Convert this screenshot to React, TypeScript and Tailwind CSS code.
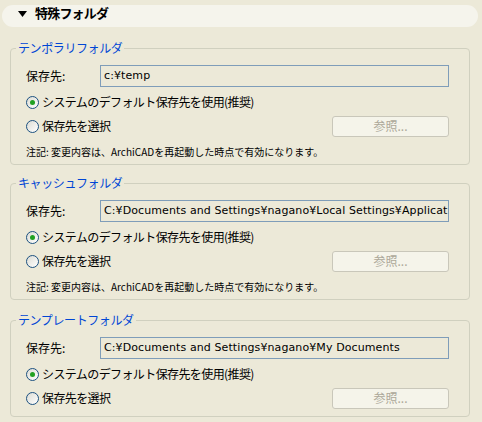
import React from 'react';

type FolderProps = {
  title: string;
  path: string;
  note?: boolean;
  className?: string;
};

function Radio({ checked, label }: { checked?: boolean; label: string }) {
  return (
    <div className="flex items-center h-[20px]">
      <span className="relative flex items-center justify-center w-[13px] h-[13px] rounded-full border border-[#1C5180] bg-gradient-to-br from-[#DCDCD4] to-white">
        {checked && <span className="w-[5px] h-[5px] rounded-full bg-[#21A121]" />}
      </span>
      <span className="ml-[3px] text-[12px] tracking-[-0.6px] text-black">{label}</span>
    </div>
  );
}

function FolderGroup({ title, path, note, className }: FolderProps) {
  return (
    <fieldset className={`ml-[10px] w-[460px] border border-[#D0D0BF] rounded-[4px] ${note ? 'pb-[5px]' : 'pb-[7px]'} ${className ?? ''}`}>
      <legend className="ml-[5px] px-[2px] h-[14px] leading-[14px] text-[12px] tracking-[-0.4px] text-[#0046D5]">{title}</legend>
      <div className="pl-[15px]">
        <div className="mt-[10px] flex items-center h-[22px]">
          <span className="w-[74px] text-[12px] text-black">保存先:</span>
          <div className="w-[349px] h-[22px] border border-[#7F9DB9] flex items-center px-[3px] overflow-hidden whitespace-nowrap text-[11px] tracking-[0.1px] font-['DejaVu_Sans',sans-serif] text-black">
            {path}
          </div>
        </div>
        <div className="mt-[5px]">
          <Radio checked label="システムのデフォルト保存先を使用(推奨)" />
        </div>
        <div className="mt-[3px] flex items-center justify-between h-[22px] pr-[20px]">
          <Radio label="保存先を選択" />
          <div className="w-[117px] h-[21px] rounded-[3px] border border-[#C9C7BA] bg-[#F5F4EA] flex items-center justify-center text-[12px] text-[#ACA899]">
            参照...
          </div>
        </div>
        {note && (
          <div className="mt-[8px] h-[14px] leading-[14px] text-[10px] text-black">
            注記: 変更内容は、ArchiCADを再起動した時点で有効になります。
          </div>
        )}
      </div>
    </fieldset>
  );
}

export default function App() {
  return (
    <div className="w-[482px] h-[422px] overflow-hidden bg-[#ECE9D8] pt-[5px] font-['Noto_Sans_CJK_JP',sans-serif]">
      <div className="ml-[2px] w-[476px] h-[22px] rounded-full bg-[#F5F4EC] flex items-start">
        <svg className="ml-[16px] mt-[6px]" width="9" height="6" viewBox="0 0 9 6">
          <polygon points="0,0 9,0 4.5,6" fill="#000" />
        </svg>
        <span className="ml-[8px] leading-[16px] text-[13px] tracking-[-0.8px] font-bold text-black">特殊フォルダ</span>
      </div>

      <FolderGroup className="mt-[14px]" title="テンポラリフォルダ" path="c:¥temp" note />
      <FolderGroup className="mt-[11px]" title="キャッシュフォルダ" path="C:¥Documents and Settings¥nagano¥Local Settings¥Applicat" note />
      <FolderGroup className="mt-[13px]" title="テンプレートフォルダ" path="C:¥Documents and Settings¥nagano¥My Documents" />
    </div>
  );
}
